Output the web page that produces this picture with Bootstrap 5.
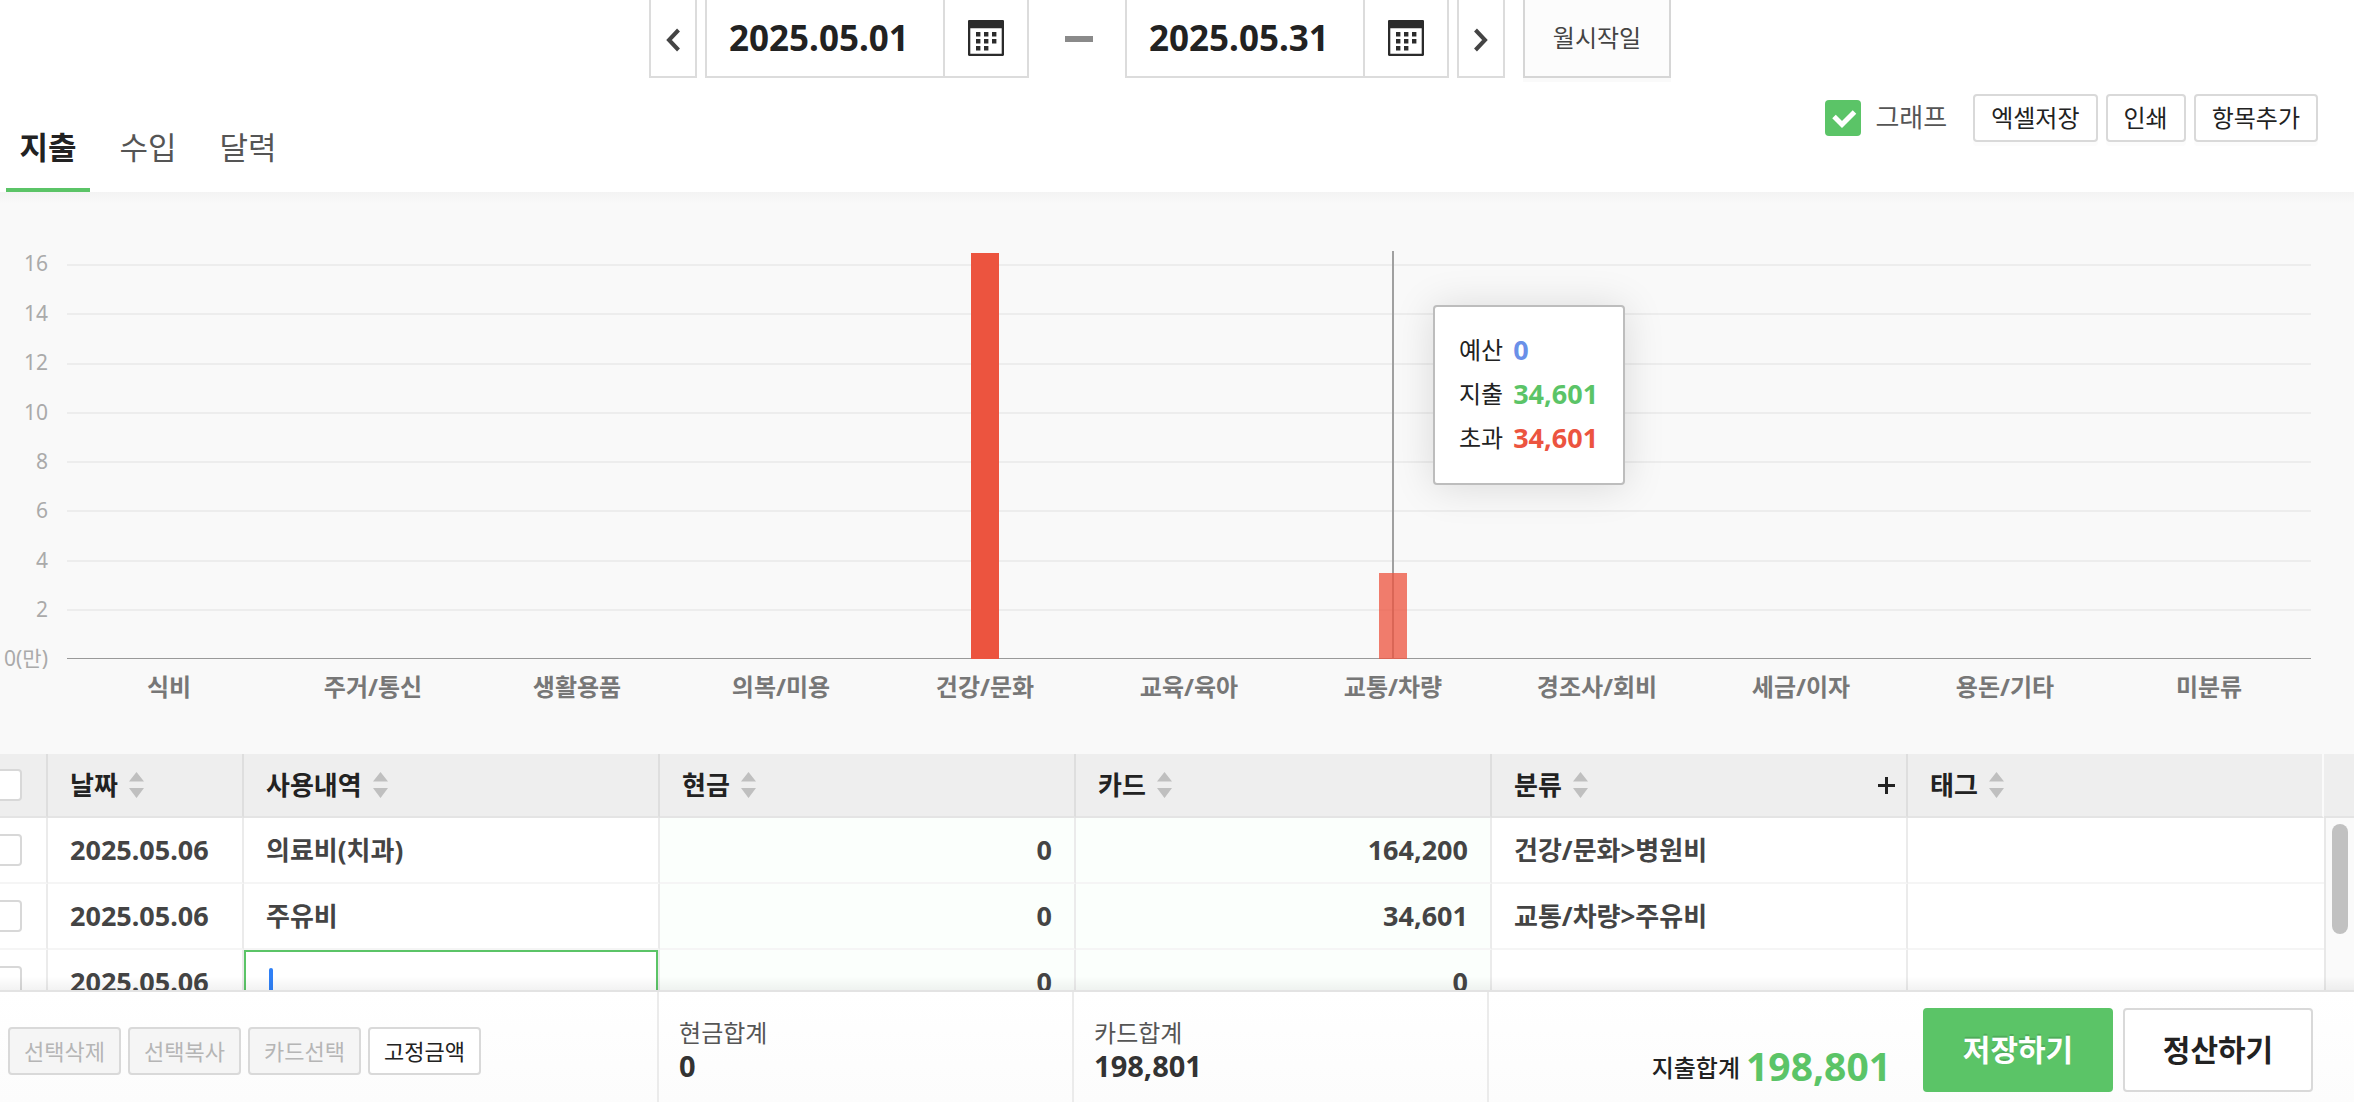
<!DOCTYPE html>
<html lang="ko">
<head>
<meta charset="utf-8">
<meta name="viewport" content="width=device-width, initial-scale=1">
<title>가계부</title>
<link href="https://cdn.jsdelivr.net/npm/bootstrap@5.3.0/dist/css/bootstrap.min.css" rel="stylesheet">
<style>
  :root { --green:#5bc467; --red:#ec543f; --line:#dcdcdc; }
  body { font-family:"Noto Sans","Noto Sans CJK KR",sans-serif; font-size:24px; line-height:1.2; color:#222; background:#fff; }
  .btn, .form-control { font-size:24px; line-height:1.2; border-radius:0; }
  .page-head { padding-right:34px; }

  /* period picker */
  .period { height:78px; }
  .period .btn, .period .form-control { border:2px solid var(--line); border-top:0; background:#fff; }
  .arrow-btn { width:48px; }
  .date-group { width:324px; }
  .date-group .form-control { font-size:35px; font-weight:700; color:#222; padding:0 22px; }
  .date-group .btn { width:84px; }
  .period .month-btn { width:148px; margin-left:18px; background:#fcfcfc; border-color:#d6d6d6; color:#444; font-size:24px; box-shadow:0 4px 0 #fafafa; }
  .dash { width:28px; height:6px; background:#8a8a8a; margin:0 32px 0 36px; }

  /* tabs and tools */
  .sub-head { height:114px; padding-left:6px; }
  .tab-list { gap:16px; }
  .tab-list .nav-link { width:84px; padding:0 0 17px; font-size:31px; line-height:48px; color:#555; text-align:center; border-bottom:4px solid transparent; }
  .tab-list .nav-link.active { color:#222; font-weight:700; border-color:var(--green); }
  .tools { gap:8px; padding:16px 2px 0 0; }
  .graph-check { height:48px; gap:14px; margin-right:18px; font-size:26px; color:#555; }
  .graph-check .form-check-input { width:36px; height:36px; margin:0; border:0; border-radius:4px; }
  .graph-check .form-check-input:checked { background-color:var(--green); background-image:url("data:image/svg+xml,%3csvg xmlns='http://www.w3.org/2000/svg' viewBox='0 0 36 36'%3e%3cpath fill='none' stroke='%23fff' stroke-width='5' d='M9 16.5 17 24.5 29.5 12'/%3e%3c/svg%3e"); background-size:100%; }
  .tool-btn { height:48px; padding:0 16px; border:2px solid #d9d9d9; border-radius:4px; background:#fff; color:#222; box-shadow:0 4px 0 #fcfcfc; white-space:nowrap; }

  /* chart */
  .chart { height:562px; padding:59px 43px 0 0; background:linear-gradient(#f3f3f3,#f9f9f9 12px); }
  .y-axis { width:67px; height:395px; margin-top:13px; padding-right:19px; font-size:21px; color:#aaa; }
  .y-axis span { height:0; display:flex; align-items:center; justify-content:flex-end; }
  .plot { display:grid; height:408px; }
  .plot > * { grid-area:1/1; min-width:0; }
  .grid-lines { margin-top:13px; border-bottom:1px solid #999; }
  .grid-lines i { flex:1; border-top:2px solid #ededed; }
  .slot { flex:1; position:relative; display:flex; align-items:flex-end; justify-content:center; }
  .bar { width:28px; background:var(--red); position:relative; }
  .slot.hover::before { content:""; position:absolute; top:0; bottom:0; left:calc(50% - 1px); width:2px; background:#a0a0a0; }
  .slot.hover .bar { background:rgba(236,84,63,.76); }
  .tip { position:absolute; z-index:2; top:54px; left:calc(50% + 40px); width:192px; height:180px; padding:21px 0 0 24px; background:#fff; border:2px solid #bdbdbd; border-radius:4px; box-shadow:0 2px 40px rgba(0,0,0,.13); }
  .tip div { gap:10px; height:44px; }
  .tip b { font-size:27px; }
  .x-axis { margin-top:12px; font-weight:700; color:#777; }
  .x-axis span { flex:1; line-height:32px; text-align:center; white-space:nowrap; }

  /* ledger */
  .ledger { min-height:0; flex:1 1 0; overflow:hidden; position:relative; }
  .ledger::after { content:""; position:absolute; left:0; right:0; bottom:0; height:14px; background:linear-gradient(rgba(0,0,0,0),rgba(0,0,0,.05)); }
  .ledger table { table-layout:fixed; border-collapse:separate; border-spacing:0; font-weight:700; font-size:26px; line-height:32px; }
  .ledger th { height:64px; padding:0 22px; background:#eee; border:solid #e4e4e4; border-width:0 2px 2px 0; border-right-color:#dedede; color:#222; vertical-align:middle; }
  .ledger th:last-child { border-right-color:#fafafa; }
  .ledger td { height:66px; padding:0 22px; background:#fff; border:solid #f5f5f5; border-width:0 2px 2px 0; border-right-color:#ebebeb; color:#444; vertical-align:middle; }
  .ledger td:last-child { border-right-width:0; }
  .ledger .money { background:#fbfffc; text-align:right; }
  .num { font-size:27px; }
  .ledger .col-check { width:48px; padding:0; }
  .col-date { width:196px; }
  .ledger .form-check-input { display:block; width:32px; height:32px; margin:0 0 0 -10px; border:2px solid #d8d8d8; border-radius:4px; background-color:#fff; }
  .sort { width:15px; height:26px; margin-left:11px; fill:#bfbfbf; }
  .ledger td.editing { padding:0; position:relative; }
  .editing .form-control { height:64px; border:2px solid var(--green); box-shadow:none; padding:0 22px; }
  .caret { position:absolute; left:25px; top:18px; width:4px; height:32px; border-radius:2px; background:#2f80f6; }
  .add-btn { width:20px; height:32px; padding:0; border:0; }
  .scroll-side { width:30px; background:#fafafa; border-left:2px solid #e8e8e8; }
  .scroll-head { height:64px; margin-left:-2px; background:#eee; border-bottom:2px solid #e4e4e4; }
  .thumb { width:16px; height:110px; margin:6px 0 0 6px; border-radius:8px; background:#c1c1c1; }

  /* footer */
  .summary { height:112px; border-top:2px solid #e3e3e3; background:linear-gradient(#fff,#fcfcfc); }
  .summary > div { border-right:2px solid #ebebeb; }
  .summary > div:last-child { border-right:0; }
  .bulk { flex:0 0 28%; gap:7px; padding:8px 0 0 8px; }
  .bulk .tool-btn { padding:0; width:113px; font-size:22px; box-shadow:none; }
  .bulk .tool-btn:disabled { background:#f5f5f5; border-color:#d9d9d9; color:#b5b5b5; opacity:1; }
  .sum-box { flex:0 0 415px; padding:25px 0 0 20px; color:#555; line-height:32px; }
  .sum-box b { color:#333; font-size:29px; line-height:34px; }
  .grand { gap:10px; padding:16px 41px 0 0; }
  .grand-label { line-height:32px; margin:44px 0 0; }
  .grand-total { font-size:39px; line-height:52px; margin:32px 22px 0 -4px; color:var(--green); }
  .big-btn { width:190px; height:84px; font-size:30px; font-weight:700; border-radius:4px; border:2px solid #d9d9d9; background:#fff; color:#222; }
  .big-btn.save { background:var(--green); border-color:var(--green); color:#fff; text-shadow:0 -2px 0 rgba(0,0,0,.12); }
</style>
<script src="https://cdn.jsdelivr.net/npm/bootstrap@5.3.0/dist/js/bootstrap.bundle.min.js"></script>
</head>
<body class="d-flex flex-column vh-100 overflow-hidden">
<svg class="d-none" aria-hidden="true">
  <symbol id="cal" viewBox="0 0 36 36">
    <rect x="1" y="1" width="34" height="34" rx="1.5" fill="#fff" stroke="#2b2b2b" stroke-width="2.6"/>
    <path fill="#2b2b2b" d="M0 2Q0 0 2 0H34Q36 0 36 2V8.3H0zM8 12h4.4v4.6H8zM16 12h4.4v4.6H16zM24 12h4.4v4.6H24zM8 19h4.4v4.6H8zM16 19h4.4v4.6H16zM24 19h4.4v4.6H24zM8 26h4.4v4.6H8zM16 26h4.4v4.6H16z"/>
  </symbol>
  <symbol id="sort" viewBox="0 0 15 26"><path d="M7.5 0 15 9.5H0zM0 16H15L7.5 26z"/></symbol>
</svg>

<header class="page-head flex-shrink-0">
  <div class="period d-flex justify-content-center align-items-stretch">
    <button class="btn arrow-btn p-0 me-2" type="button" aria-label="이전"><svg width="16" height="24" fill="none" stroke="#444" stroke-width="4"><path d="M13.500 2 4 12 13.500 22"/></svg></button>
    <div class="date-group d-flex">
      <input class="form-control" type="text" value="2025.05.01" aria-label="시작일">
      <button class="btn border-start-0 p-0 flex-shrink-0" type="button" aria-label="시작일 선택"><svg width="36" height="36"><use href="#cal"/></svg></button>
    </div>
    <div class="dash align-self-center"></div>
    <div class="date-group d-flex me-2">
      <input class="form-control" type="text" value="2025.05.31" aria-label="종료일">
      <button class="btn border-start-0 p-0 flex-shrink-0" type="button" aria-label="종료일 선택"><svg width="36" height="36"><use href="#cal"/></svg></button>
    </div>
    <button class="btn arrow-btn p-0" type="button" aria-label="다음"><svg width="16" height="24" fill="none" stroke="#444" stroke-width="4"><path d="M2.500 2 12 12 2.500 22"/></svg></button>
    <button class="btn month-btn p-0" type="button">월시작일</button>
  </div>

  <div class="sub-head d-flex justify-content-between">
    <nav class="nav tab-list align-items-end">
      <a class="nav-link active" href="#" aria-current="page">지출</a>
      <a class="nav-link" href="#">수입</a>
      <a class="nav-link" href="#">달력</a>
    </nav>
    <div class="tools d-flex align-items-start">
      <div class="graph-check d-flex align-items-center">
        <input class="form-check-input" type="checkbox" id="graph" checked>
        <label for="graph">그래프</label>
      </div>
      <button class="btn tool-btn" type="button">엑셀저장</button>
      <button class="btn tool-btn" type="button">인쇄</button>
      <button class="btn tool-btn" type="button">항목추가</button>
    </div>
  </div>
</header>

<section class="chart d-flex flex-shrink-0">
  <div class="y-axis d-flex flex-column justify-content-between flex-shrink-0">
    <span>16</span><span>14</span><span>12</span><span>10</span><span>8</span><span>6</span><span>4</span><span>2</span><span>0(만)</span>
  </div>
  <div class="flex-grow-1">
    <div class="plot">
      <div class="grid-lines d-flex flex-column"><i></i><i></i><i></i><i></i><i></i><i></i><i></i><i></i></div>
      <div class="d-flex">
        <div class="slot"></div><div class="slot"></div><div class="slot"></div><div class="slot"></div>
        <div class="slot"><div class="bar" style="height:99.5%"></div></div>
        <div class="slot"></div>
        <div class="slot hover">
          <div class="bar" style="height:21%"></div>
          <div class="tip">
            <div class="d-flex align-items-center"><span>예산</span><b style="color:#6a90e8">0</b></div>
            <div class="d-flex align-items-center"><span>지출</span><b style="color:#5bc467">34,601</b></div>
            <div class="d-flex align-items-center"><span>초과</span><b style="color:#ec543f">34,601</b></div>
          </div>
        </div>
        <div class="slot"></div><div class="slot"></div><div class="slot"></div><div class="slot"></div>
      </div>
    </div>
    <div class="x-axis d-flex">
      <span>식비</span><span>주거/통신</span><span>생활용품</span><span>의복/미용</span><span>건강/문화</span><span>교육/육아</span><span>교통/차량</span><span>경조사/회비</span><span>세금/이자</span><span>용돈/기타</span><span>미분류</span>
    </div>
  </div>
</section>

<section class="ledger d-flex">
  <div class="flex-grow-1">
    <table class="table mb-0 w-100">
      <thead>
        <tr>
          <th class="col-check"><input class="form-check-input" type="checkbox" aria-label="전체 선택"></th>
          <th class="col-date"><div class="d-flex align-items-center">날짜<svg class="sort"><use href="#sort"/></svg></div></th>
          <th><div class="d-flex align-items-center">사용내역<svg class="sort"><use href="#sort"/></svg></div></th>
          <th><div class="d-flex align-items-center">현금<svg class="sort"><use href="#sort"/></svg></div></th>
          <th><div class="d-flex align-items-center">카드<svg class="sort"><use href="#sort"/></svg></div></th>
          <th class="pe-2"><div class="d-flex align-items-center">분류<svg class="sort"><use href="#sort"/></svg><button class="btn add-btn ms-auto d-flex align-items-center" type="button" aria-label="분류 추가"><svg width="17" height="17" stroke="#222" stroke-width="3"><path d="M0 8.500H17M8.500 0V17"/></svg></button></div></th>
          <th><div class="d-flex align-items-center">태그<svg class="sort"><use href="#sort"/></svg></div></th>
        </tr>
      </thead>
      <tbody>
        <tr>
          <td class="col-check"><input class="form-check-input" type="checkbox" aria-label="행 1 선택"></td>
          <td class="num">2025.05.06</td><td>의료비(치과)</td>
          <td class="money num">0</td><td class="money num">164,200</td>
          <td>건강/문화&gt;병원비</td><td></td>
        </tr>
        <tr>
          <td class="col-check"><input class="form-check-input" type="checkbox" aria-label="행 2 선택"></td>
          <td class="num">2025.05.06</td><td>주유비</td>
          <td class="money num">0</td><td class="money num">34,601</td>
          <td>교통/차량&gt;주유비</td><td></td>
        </tr>
        <tr>
          <td class="col-check"><input class="form-check-input" type="checkbox" aria-label="행 3 선택"></td>
          <td class="num">2025.05.06</td>
          <td class="editing"><input class="form-control" type="text" aria-label="사용내역"><span class="caret"></span></td>
          <td class="money num">0</td><td class="money num">0</td>
          <td></td><td></td>
        </tr>
      </tbody>
    </table>
  </div>
  <div class="scroll-side flex-shrink-0"><div class="scroll-head"></div><div class="thumb"></div></div>
</section>

<footer class="summary d-flex flex-shrink-0">
  <div class="bulk d-flex align-items-center">
    <button class="btn tool-btn" type="button" disabled>선택삭제</button>
    <button class="btn tool-btn" type="button" disabled>선택복사</button>
    <button class="btn tool-btn" type="button" disabled>카드선택</button>
    <button class="btn tool-btn" type="button">고정금액</button>
  </div>
  <div class="sum-box d-flex flex-column"><span>현금합계</span><b>0</b></div>
  <div class="sum-box d-flex flex-column"><span>카드합계</span><b>198,801</b></div>
  <div class="grand d-flex flex-grow-1 justify-content-end align-items-start">
    <span class="grand-label fw-medium">지출합계</span><b class="grand-total">198,801</b>
    <button class="btn big-btn save" type="button">저장하기</button>
    <button class="btn big-btn" type="button">정산하기</button>
  </div>
</footer>
</body>
</html>
